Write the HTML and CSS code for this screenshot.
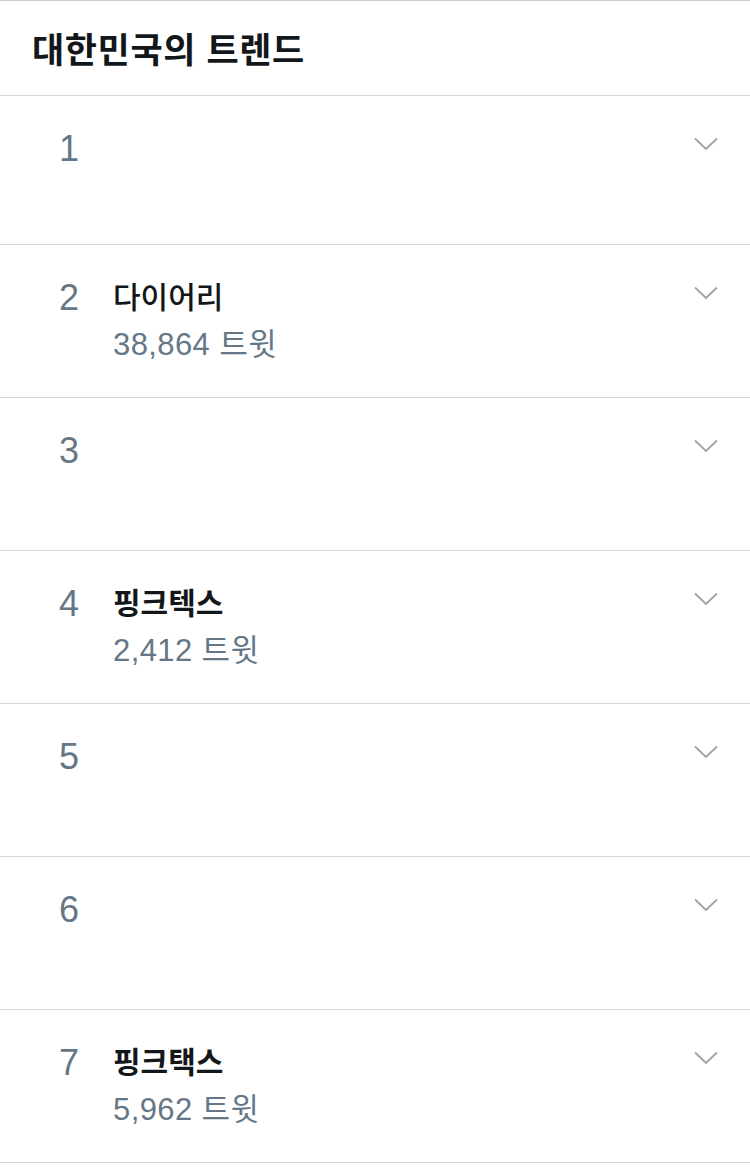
FILE: index.html
```html
<!DOCTYPE html>
<html lang="ko">
<head>
<meta charset="utf-8">
<link rel="stylesheet" href="styles.css">
</head>
<body>
<div class="page">
  <header class="header"><h1 class="header-title">대한민국의 트렌드</h1></header>
  <ul class="trends">
    <li class="trend trend-first">
      <span class="rank">1</span>
      <div class="info"></div>
      <svg class="chev" viewBox="0 0 24 14"><path d="M1 1.5 L12 12 L23 1.5"/></svg>
    </li>
    <li class="trend">
      <span class="rank">2</span>
      <div class="info"><div class="name">다이어리</div><div class="count">38,864 트윗</div></div>
      <svg class="chev" viewBox="0 0 24 14"><path d="M1 1.5 L12 12 L23 1.5"/></svg>
    </li>
    <li class="trend">
      <span class="rank">3</span>
      <div class="info"></div>
      <svg class="chev" viewBox="0 0 24 14"><path d="M1 1.5 L12 12 L23 1.5"/></svg>
    </li>
    <li class="trend">
      <span class="rank">4</span>
      <div class="info"><div class="name name-bold">핑크텍스</div><div class="count">2,412 트윗</div></div>
      <svg class="chev" viewBox="0 0 24 14"><path d="M1 1.5 L12 12 L23 1.5"/></svg>
    </li>
    <li class="trend">
      <span class="rank">5</span>
      <div class="info"></div>
      <svg class="chev" viewBox="0 0 24 14"><path d="M1 1.5 L12 12 L23 1.5"/></svg>
    </li>
    <li class="trend">
      <span class="rank">6</span>
      <div class="info"></div>
      <svg class="chev" viewBox="0 0 24 14"><path d="M1 1.5 L12 12 L23 1.5"/></svg>
    </li>
    <li class="trend">
      <span class="rank">7</span>
      <div class="info"><div class="name name-bold">핑크택스</div><div class="count">5,962 트윗</div></div>
      <svg class="chev" viewBox="0 0 24 14"><path d="M1 1.5 L12 12 L23 1.5"/></svg>
    </li>
  </ul>
</div>
</body>
</html>
```

FILE: styles.css
```css
* { box-sizing: border-box; }
html, body { margin: 0; padding: 0; background: #fff; }
body {
  font-family: "Liberation Sans", "Noto Sans CJK KR", sans-serif;
  color: #14171a;
}
.page { width: 750px; }
.header {
  height: 96px;
  border-top: 1px solid #c9cdd2;
  border-bottom: 1px solid #d3d7dc;
  display: flex;
  align-items: center;
  padding-left: 32px;
}
.header-title {
  margin: 0;
  font-family: "Noto Sans CJK KR", sans-serif;
  font-weight: 700;
  font-size: 35px;
  line-height: 40px;
  letter-spacing: 0.6px;
  color: #14171a;
}
.trends { list-style: none; margin: 0; padding: 0; }
.trend {
  display: flex;
  align-items: flex-start;
  height: 153px;
  border-bottom: 1px solid #d3d7dc;
  padding: 0 32px 0 0;
}
.trend-first { height: 149px; }
.rank {
  width: 113px;
  padding-left: 59px;
  padding-top: 33px;
  font-size: 36px;
  line-height: 40px;
  color: #657786;
  flex: none;
}
.info { flex: 1; padding-top: 31px; }
.name {
  font-family: "Noto Sans CJK KR", sans-serif;
  font-size: 30px;
  line-height: 38px;
  font-weight: 500;
  color: #14171a;
}
.name-bold { font-weight: 700; }
.count {
  margin-top: 12px;
  font-size: 31px;
  line-height: 38px;
  letter-spacing: 0.4px;
  color: #657786;
}
.chev {
  width: 24px;
  height: 14px;
  margin-top: 41px;
  flex: none;
  fill: none;
  stroke: #9aa4ad;
  stroke-width: 1.8;
}
```
